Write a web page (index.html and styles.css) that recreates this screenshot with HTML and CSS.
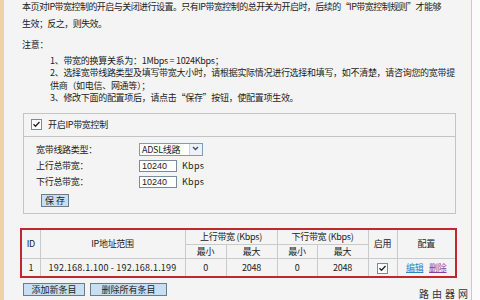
FILE: index.html
```html
<!DOCTYPE html>
<html lang="zh-CN">
<head>
    <meta charset="UTF-8">
    <meta name="viewport" content="width=device-width, initial-scale=1.0">
    <title>IP带宽控制</title>
    <link rel="stylesheet" href="styles.css">
</head>
<body>
    <div class="page">
        <div class="content">
            <p class="intro">本页对IP带宽控制的开启与关闭进行设置。只有IP带宽控制的总开关为开启时，后续的“IP带宽控制规则”才能够<br>生效；反之，则失效。</p>
            <p class="note-title">注意：</p>
            <div class="notes">
                <div>1、带宽的换算关系为：1Mbps = 1024Kbps；</div>
                <div>2、选择宽带线路类型及填写带宽大小时，请根据实际情况进行选择和填写，如不清楚，请咨询您的宽带提<br>供商（如电信、网通等）；</div>
                <div>3、修改下面的配置项后，请点击“保存”按钮，使配置项生效。</div>
            </div>

            <div class="panel">
                <div class="panel-head">
                    <span class="check"><svg width="9" height="9" viewBox="0 0 9 9"><path d="M1.5 4.2 L3.5 6.3 L7.5 2" fill="none" stroke="#222" stroke-width="1.3"/></svg></span>
                    开启IP带宽控制
                </div>
                <div class="panel-body">
                    <div class="field">
                        <label>宽带线路类型：</label>
                        <span class="select">ADSL线路<span class="arrow"><svg width="11" height="9" viewBox="0 0 11 9"><path d="M3 3 L5.5 5.5 L8 3" fill="none" stroke="#3c4f6e" stroke-width="1.4"/></svg></span></span>
                    </div>
                    <div class="field">
                        <label>上行总带宽：</label>
                        <input type="text" class="num" value="10240">
                        <span class="unit">Kbps</span>
                    </div>
                    <div class="field">
                        <label>下行总带宽：</label>
                        <input type="text" class="num" value="10240">
                        <span class="unit">Kbps</span>
                    </div>
                    <button type="button" class="btn save">保 存</button>
                </div>
            </div>

            <div class="rules-box">
                <table class="rules">
                    <colgroup>
                        <col style="width:18px">
                        <col style="width:145px">
                        <col style="width:41px">
                        <col style="width:51px">
                        <col style="width:40px">
                        <col style="width:51px">
                        <col style="width:29px">
                        <col>
                    </colgroup>
                    <tr class="head1">
                        <th rowspan="2">ID</th>
                        <th rowspan="2">IP地址范围</th>
                        <th colspan="2">上行带宽 (Kbps)</th>
                        <th colspan="2">下行带宽 (Kbps)</th>
                        <th rowspan="2">启用</th>
                        <th rowspan="2">配置</th>
                    </tr>
                    <tr class="head2">
                        <th>最小</th>
                        <th>最大</th>
                        <th>最小</th>
                        <th>最大</th>
                    </tr>
                    <tr class="row">
                        <td>1</td>
                        <td class="ip">192.168.1.100 - 192.168.1.199</td>
                        <td>0</td>
                        <td>2048</td>
                        <td>0</td>
                        <td>2048</td>
                        <td><span class="check"><svg width="9" height="9" viewBox="0 0 9 9"><path d="M1.5 4.2 L3.5 6.3 L7.5 2" fill="none" stroke="#222" stroke-width="1.3"/></svg></span></td>
                        <td><a href="#" class="edit">编辑</a> <a href="#" class="del">删除</a></td>
                    </tr>
                </table>
            </div>

            <div class="actions">
                <button type="button" class="btn add">添加新条目</button>
                <button type="button" class="btn clear">删除所有条目</button>
            </div>
        </div>
        <div class="side"></div>
    </div>
    <div class="watermark">路由器网</div>
</body>
</html>
```

FILE: styles.css
```css
body {
    margin: 0;
    font-family: "Noto Sans CJK SC", sans-serif;
    font-size: 9px;
    letter-spacing: -0.3px;
    color: #222;
    background-color: #f4f4f4;
}

.page {
    display: flex;
    height: 300px;
    border-left: 4px solid #ecd3a5;
    overflow: hidden;
}

.content {
    flex: 1;
    min-width: 0;
    padding: 0 14px 0 18px;
}

.side {
    width: 8px;
    border-left: 1px solid #e2c98f;
    background-color: #fbfbfb;
}

.intro {
    margin: -2px 0 0;
    line-height: 17px;
    letter-spacing: -0.55px;
    white-space: nowrap;
}

.note-title {
    margin: 7px 0 0;
    line-height: 12.5px;
}

.notes {
    margin: 3px 0 0 28px;
    line-height: 12.5px;
    white-space: nowrap;
}

/* 总开关面板 */
.panel {
    margin: 8px 1px 0;
    border: 1px solid #c4c4c4;
}

.panel-head {
    display: flex;
    align-items: center;
    height: 22px;
    padding-left: 7px;
    border-bottom: 1px solid #c4c4c4;
}

.check {
    display: inline-block;
    width: 9px;
    height: 9px;
    border: 1px solid #7b8a9a;
    background-color: #fff;
    margin-right: 6px;
    line-height: 0;
}

.panel-body {
    padding: 5px 0 6px 12px;
}

.field {
    display: flex;
    align-items: center;
    height: 16px;
}

.field label {
    width: 103px;
}

.select {
    display: flex;
    align-items: center;
    justify-content: space-between;
    box-sizing: border-box;
    width: 64px;
    height: 13px;
    padding-left: 2px;
    border: 1px solid #7f9db9;
    background-color: #fff;
}

.arrow {
    width: 12px;
    height: 11px;
    border-left: 1px solid #c9d4e0;
    background-color: #eef2f6;
    line-height: 0;
}

.num {
    box-sizing: border-box;
    width: 38px;
    height: 12px;
    padding: 0 2px;
    border: 1px solid #7a8a99;
    font-family: "Liberation Sans", sans-serif;
    font-size: 9px;
    color: #222;
}

.unit {
    margin-left: 5px;
    letter-spacing: 0.3px;
}

.btn {
    box-sizing: border-box;
    height: 13px;
    padding: 0;
    border: 1px solid #6d7b88;
    background-color: #c6dff2;
    font-family: inherit;
    font-size: 9px;
    line-height: 11px;
    color: #222;
}

.save {
    width: 28px;
    margin: 4px 0 0 5px;
}

/* 规则列表 */
.rules-box {
    margin: 14px 0 0 -2px;
    border: 2px solid #c5262c;
}

.rules {
    width: 100%;
    table-layout: fixed;
    border-collapse: collapse;
}

.rules th,
.rules td {
    border: 1px solid #cacaca;
    padding: 0;
    text-align: center;
    font-weight: normal;
    white-space: nowrap;
}

.rules tr:first-child th {
    border-top: none;
}

.rules th:first-child,
.rules td:first-child {
    border-left: none;
}

.rules th:last-child,
.rules td:last-child {
    border-right: none;
}

.rules .row td {
    border-bottom: none;
}

.head1 {
    height: 15px;
}

.head2 {
    height: 13px;
}

.row {
    height: 17px;
}

.ip {
    letter-spacing: 0.2px;
}

.rules .check {
    margin: 0;
    vertical-align: middle;
}

.edit {
    color: #2b87c4;
}

.del {
    color: #8e3f9c;
    margin-left: 4px;
}

.actions {
    display: flex;
    gap: 5px;
    margin: 5px 0 0 1px;
}

.add {
    width: 62px;
}

.clear {
    width: 77px;
}

.watermark {
    position: absolute;
    top: 288px;
    right: 9px;
    font-size: 10px;
    line-height: 12px;
    letter-spacing: 3px;
    color: #333;
}
```
